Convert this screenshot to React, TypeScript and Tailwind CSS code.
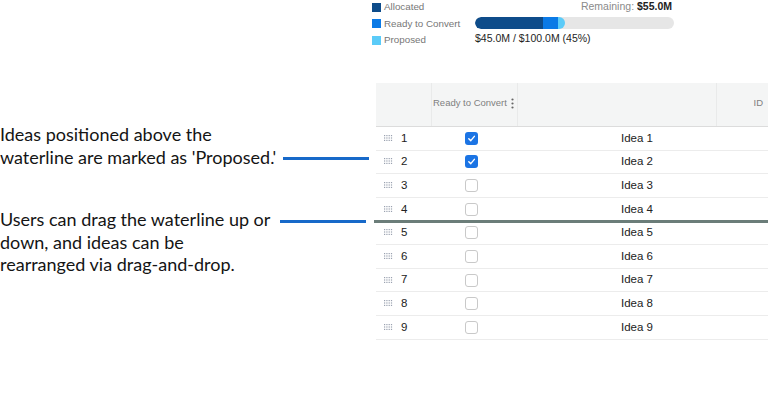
import React from 'react';

const rows = [1, 2, 3, 4, 5, 6, 7, 8, 9];
const checked = [1, 2];

function DragDots() {
  return (
    <svg width="9" height="7" viewBox="0 0 9 7" className="text-gray-400">
      {[0, 1, 2].map((r) =>
        [0, 1, 2, 3].map((c) => (
          <rect key={`${r}-${c}`} x={c * 2.3} y={r * 2.4} width="1.2" height="1.2" fill="currentColor" />
        ))
      )}
    </svg>
  );
}

function Checkbox({ on }: { on: boolean }) {
  if (on) {
    return (
      <div className="w-[13px] h-[13px] rounded-[3px] bg-[#1b74e4] flex items-center justify-center">
        <svg width="9" height="9" viewBox="0 0 10 10">
          <path d="M2 5.2 L4.2 7.4 L8.2 2.6" stroke="white" strokeWidth="1.6" fill="none" strokeLinecap="round" strokeLinejoin="round" />
        </svg>
      </div>
    );
  }
  return <div className="w-[13px] h-[13px] rounded-[3px] border border-[#c9c9c9] bg-white" />;
}

export default function App() {
  return (
    <div className="w-[768px] h-[406px] bg-white overflow-hidden flex">
      {/* Annotations */}
      <div className="w-[372px] shrink-0 pt-[123px] font-['Lato',sans-serif] text-[18px] leading-[22.5px] text-[#141414]">
        <p>
          Ideas positioned above the
          <br />
          waterline are marked as 'Proposed.'
          <span className="inline-block align-middle ml-[7px] w-[86px] h-[3px] bg-[#1769c9]" />
        </p>
        <p className="mt-[40px]">
          Users can drag the waterline up or
          <span className="inline-block align-middle ml-[10px] w-[86px] h-[3px] bg-[#1769c9]" />
          <br />
          down, and ideas can be
          <br />
          rearranged via drag-and-drop.
        </p>
      </div>

      {/* Budget + table */}
      <div className="flex-1 font-['Liberation_Sans',Arial,sans-serif]">
        <div className="h-[48px] flex">
          <div className="w-[103px] pt-[1px] flex flex-col gap-[4px] text-[9.8px] leading-[12.5px] text-[#777] whitespace-nowrap">
            <div className="flex items-center gap-[3px]">
              <span className="w-[9px] h-[9px] bg-[#0e4c8a]" />
              Allocated
            </div>
            <div className="flex items-center gap-[3px]">
              <span className="w-[9px] h-[9px] bg-[#0b7ae6]" />
              Ready to Convert
            </div>
            <div className="flex items-center gap-[3px]">
              <span className="w-[9px] h-[9px] bg-[#5bcbf8]" />
              Proposed
            </div>
          </div>
          <div className="w-[199px] flex flex-col">
            <div className="text-right text-[10.5px] leading-[12px] text-[#8a8a8a] pr-[2px]">
              Remaining: <span className="text-[#222] font-bold">$55.0M</span>
            </div>
            <div className="mt-[5px] h-[12px] rounded-full bg-[#e6e6e6] flex overflow-hidden">
              <div className="w-[68px] bg-[#0e4c8a] rounded-l-full" />
              <div className="w-[15px] bg-[#0b7ae6]" />
              <div className="w-[7px] bg-[#5bcbf8] rounded-r-full" />
            </div>
            <div className="mt-[2px] text-[10.5px] leading-[14px] text-[#1e1e1e]">
              $45.0M / $100.0M (45%)
            </div>
          </div>
        </div>

        <div className="mt-[35px] ml-[4px] relative">
          {/* Header */}
          <div className="h-[44px] bg-[#f4f5f5] border-b-[1.5px] border-[#dcdcdc] flex text-[9.5px] text-[#808080]">
            <div className="w-[56px] border-r border-[#e9eaea]" />
            <div className="w-[86px] border-r border-[#e9eaea] flex items-center pl-[1px] pb-[2px] gap-[4px] whitespace-nowrap">
              <span>Ready to Convert</span>
              <svg width="3" height="11" viewBox="0 0 3 11" className="shrink-0">
                <circle cx="1.5" cy="1.5" r="1.1" fill="#666" />
                <circle cx="1.5" cy="5.5" r="1.1" fill="#666" />
                <circle cx="1.5" cy="9.5" r="1.1" fill="#666" />
              </svg>
            </div>
            <div className="w-[199px] border-r border-[#e9eaea]" />
            <div className="flex-1 flex items-center justify-end pr-[5px] pb-[2px]">ID</div>
          </div>

          {/* Rows */}
          {rows.map((n) => (
            <div key={n} className="h-[23.625px] flex items-center border-b border-[#ececec] text-[11.5px] text-[#222]">
              <div className="w-[56px] flex items-center pl-[8px] gap-[8px]">
                <DragDots />
                <span>{n}</span>
              </div>
              <div className="w-[86px] flex pl-[33px]">
                <Checkbox on={checked.includes(n)} />
              </div>
              <div className="w-[199px] pl-[103px]">Idea {n}</div>
            </div>
          ))}

          {/* Waterline */}
          <div className="absolute left-[-2px] right-0 top-[137px] h-[3px] bg-[#6b7d79]" />
        </div>
      </div>
    </div>
  );
}
